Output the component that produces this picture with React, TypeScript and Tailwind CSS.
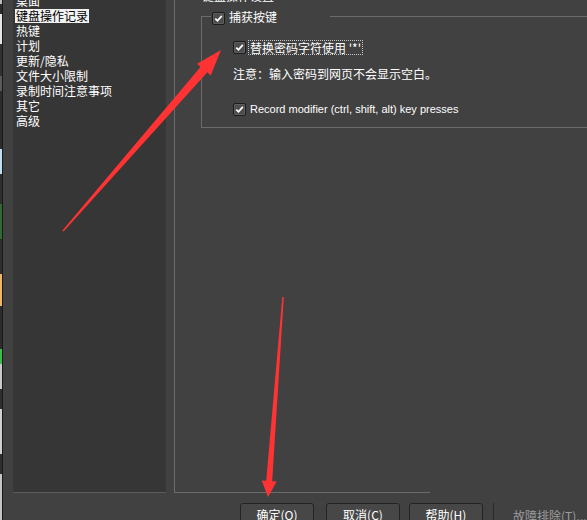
import React from "react";

const cjk = "font-['Noto_Sans_CJK_SC','Noto_Sans',sans-serif]";

const sections = [
  "桌面",
  "键盘操作记录",
  "热键",
  "计划",
  "更新/隐私",
  "文件大小限制",
  "录制时间注意事项",
  "其它",
  "高级",
];

const stripColors = [
  ["h-[4px]", "bg-[#bdbdbd]"],
  ["h-[10px]", "bg-[#2b2b2b]"],
  ["h-[30px]", "bg-[#e6e6e6]"],
  ["h-[32px]", "bg-[#303030]"],
  ["h-[15px]", "bg-[#5a5a5a]"],
  ["h-[58px]", "bg-[#2c2c2c]"],
  ["h-[25px]", "bg-[#bfe0ee]"],
  ["h-[30px]", "bg-[#2e2e2e]"],
  ["h-[35px]", "bg-[#2f6b2f]"],
  ["h-[35px]", "bg-[#2d2d2d]"],
  ["h-[32px]", "bg-[#f2b466]"],
  ["h-[43px]", "bg-[#2c2c2c]"],
  ["h-[15px]", "bg-[#3dbd4a]"],
  ["h-[25px]", "bg-[#c9c9c9]"],
  ["h-[20px]", "bg-[#2e2e2e]"],
  ["h-[45px]", "bg-[#d0d0d0]"],
  ["h-[20px]", "bg-[#2e2e2e]"],
  ["h-[46px]", "bg-[#c4c4c4]"],
];

function CheckBox() {
  return (
    <span className="inline-flex w-[13px] h-[13px] shrink-0 items-center justify-center rounded-[2px] border border-[#1c1c1c] bg-[#4c4c4c] shadow-[inset_0_0_0_1px_#5e5e5e]">
      <svg width="9" height="9" viewBox="0 0 9 9">
        <path d="M1.3 4.6 L3.5 6.8 L7.8 1.8" fill="none" stroke="#ffffff" strokeWidth="1.8" />
      </svg>
    </span>
  );
}

function FooterButton({ label, className }: { label: string; className?: string }) {
  return (
    <button
      className={`w-[74px] h-[24px] shrink-0 rounded-[3px] border border-[#232323] bg-[#474747] text-white text-[12px] leading-[22px] ${cjk} ${className ?? ""}`}
    >
      {label}
    </button>
  );
}

function Arrows() {
  return (
    <svg className="absolute inset-0 pointer-events-none" width="587" height="520" viewBox="0 0 587 520">
      <polygon
        fill="#ff3333"
        points="63.6,231.5 207.3,72.3 210.7,75.5 221,50 197.1,63.7 200.5,66.9 62.4,230.5"
      />
      <polygon
        fill="#ff3333"
        points="283.8,297.1 272.2,481.2 276.7,481.6 268,497 261.7,480.4 266.2,480.8 282.3,296.9"
      />
    </svg>
  );
}

export default function App() {
  return (
    <div className="relative w-[587px] h-[520px] overflow-hidden bg-[#414141] flex select-none">
      <div className="w-[3px] shrink-0 flex flex-col border-r border-[#1a1a1a]">
        {stripColors.map(([h, bg], i) => (
          <div key={i} className={`${h} ${bg} shrink-0`} />
        ))}
      </div>

      <div className="flex-1 flex flex-col">
        <div className="h-[493px] shrink-0 flex pl-[10px]">
          <div className="w-[153px] shrink-0 bg-[#363636] border-b border-[#5c5c5c] overflow-hidden">
            <ul className={`-mt-[7px] pl-[2px] text-white text-[12px] ${cjk}`}>
              {sections.map((s) => (
                <li key={s} className="h-[15px] leading-[15px]">
                  <span
                    className={
                      s === "键盘操作记录"
                        ? "inline-block h-[14px] leading-[14px] px-[1px] bg-[#f2f2f2] text-black"
                        : "inline-block px-[1px]"
                    }
                  >
                    {s}
                  </span>
                </li>
              ))}
            </ul>
          </div>

          <div className="ml-[8px] w-[256px] shrink-0 border-l border-b border-[#6c6c6c] flex flex-col">
            <div className={`-mt-[12px] h-[15px] leading-[15px] pl-[27px] text-white text-[12px] ${cjk}`}>
              键盘操作设置
            </div>
            <fieldset className="ml-[26px] mt-[6px] w-[420px] shrink-0 border border-[#6c6c6c] pt-[16px] pb-[10px]">
              <legend className="ml-[9px] pr-[53px] h-[15px] flex items-center">
                <span className="pl-[1px]">
                  <CheckBox />
                </span>
                <span className={`ml-[4px] text-white text-[12px] leading-[15px] ${cjk}`}>捕获按键</span>
              </legend>

              <div className="pl-[31px]">
                <div className="h-[15px] flex items-center">
                  <CheckBox />
                  <span
                    className={`ml-[2px] h-[15px] px-[1px] border border-dotted border-[#c8c8c8] text-white text-[12px] leading-[13px] ${cjk}`}
                  >
                    替换密码字符使用 '*'
                  </span>
                </div>

                <div className={`mt-[11px] h-[15px] leading-[15px] text-white text-[12px] ${cjk}`}>
                  注意：输入密码到网页不会显示空白。
                </div>

                <div className="mt-[21px] h-[15px] flex items-center">
                  <CheckBox />
                  <span className="ml-[4px] text-white text-[11px] font-['Liberation_Sans',Arial,sans-serif]">
                    Record modifier (ctrl, shift, alt) key presses
                  </span>
                </div>
              </div>
            </fieldset>
          </div>
        </div>

        <div className="mt-[10px] flex items-start pl-[237px]">
          <FooterButton label="确定(O)" />
          <FooterButton label="取消(C)" className="ml-[12px]" />
          <FooterButton label="帮助(H)" className="ml-[9px]" />
          <div className="ml-[10px] w-px h-[24px] bg-[#2a2a2a]" />
          <span className={`ml-[19px] mt-[5px] text-[12px] leading-[15px] text-[#9c9c9c] whitespace-nowrap ${cjk}`}>
            故障排除(T)...
          </span>
        </div>
      </div>

      <Arrows />
    </div>
  );
}
